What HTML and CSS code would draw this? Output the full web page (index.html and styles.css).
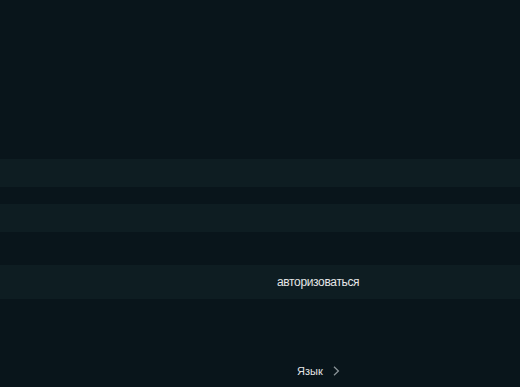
FILE: index.html
```html
<!DOCTYPE html>
<html lang="ru">

<head>
    <meta charset="UTF-8">
    <meta name="viewport" content="width=device-width, initial-scale=1.0">
    <title>Вход</title>
    <link rel="stylesheet" href="styles.css">
</head>

<body>
    <div class="page">
        <div class="field"></div>
        <div class="field second"></div>
        <div class="login">
            <span>авторизоваться</span>
        </div>
        <div class="lang">
            <span>Язык</span>
            <svg class="chevron" width="7" height="10" viewBox="0 0 7 10">
                <path d="M1 0.8 L5.4 5 L1 9.2" fill="none" stroke="#8a9397" stroke-width="1.3"/>
            </svg>
        </div>
    </div>
</body>

</html>
```

FILE: styles.css
```css
body {
    margin: 0;
    padding: 0;
    background-color: #09151b;
    color: #e4e6e7;
    font-family: "Liberation Sans", Arial, sans-serif;
    height: 100vh;
    overflow: hidden;
}

.page {
    display: flex;
    flex-direction: column;
    padding-top: 159px;
}

.field {
    height: 28px;
    background-color: #0e1d22;
}

.field.second {
    margin-top: 17px;
}

.login {
    margin-top: 33px;
    height: 34px;
    background-color: #0e1d22;
    display: flex;
    align-items: center;
    padding-left: 277px;
    font-size: 12px;
    letter-spacing: -0.35px;
}

.lang {
    margin-top: 65px;
    display: flex;
    align-items: center;
    padding-left: 297px;
    font-size: 11px;
    height: 14px;
}

.chevron {
    margin-left: 10px;
}
```
